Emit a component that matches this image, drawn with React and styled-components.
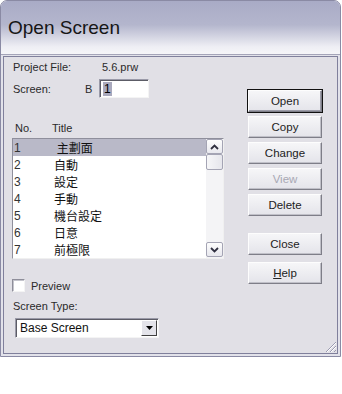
import React from 'react';
import styled, { createGlobalStyle } from 'styled-components';

const GlobalStyle = createGlobalStyle`
  body {
    margin: 0;
    background: #ffffff;
    font-family: "Liberation Sans", Arial, sans-serif;
  }
`;

const Window = styled.div`
  width: 341px;
  box-sizing: border-box;
  border: 1px solid #8a8aa4;
  border-radius: 7px 7px 0 0;
  background: #e2e2ea;
  overflow: hidden;
`;

const TitleBar = styled.div`
  height: 53px;
  padding-left: 7px;
  display: flex;
  align-items: center;
  font-size: 19px;
  color: #161616;
  background: linear-gradient(to bottom, #a9abc6 0%, #b4b6cd 45%, #eeeef4 86%, #f5f5f8 100%);
  border-bottom: 1px solid #a4a4b8;
`;

const Client = styled.div`
  position: relative;
  margin: 1px 2px 2px 2px;
  height: 296px;
  border: 1px solid #80809c;
  background: #e1e0e6;
  display: grid;
  grid-template-columns: 232px 1fr;
  font-size: 11px;
  color: #2a2a2a;
`;

const LeftCol = styled.div`
  display: flex;
  flex-direction: column;
  padding: 3px 0 0 8px;
`;

const FieldRow = styled.div`
  display: flex;
  align-items: center;
  height: ${p => p.h || 14}px;
  margin-top: ${p => p.mt || 0}px;
  padding-left: 1px;
`;

const Label = styled.span`
  width: ${p => p.w}px;
  flex: none;
`;

const TextBox = styled.div`
  width: 50px;
  height: 19px;
  box-sizing: border-box;
  background: #fff;
  border: 1px solid #9a9aa8;
  border-right-color: #f4f4f4;
  border-bottom-color: #f4f4f4;
  box-shadow: inset 1px 1px 0 #5c5c66;
  display: flex;
  align-items: center;
  padding-left: 3px;
  font-size: 12px;
`;

const Selected = styled.span`
  background: #a9a9bd;
  color: #000;
  line-height: 14px;
  padding: 0 1px;
`;

const ListHeader = styled.div`
  display: flex;
  height: 13px;
  margin-top: 23px;
  padding-left: 3px;
  align-items: center;
`;

const HeaderCell = styled.span`
  width: ${p => p.w}px;
`;

const ListBox = styled.div`
  margin-top: 4px;
  width: 212px;
  height: 121px;
  box-sizing: border-box;
  border: 1px solid #8f8f9c;
  border-right-color: #f0f0f0;
  border-bottom-color: #f0f0f0;
  background: #fff;
  display: flex;
`;

const Rows = styled.div`
  flex: 1;
`;

const Row = styled.div`
  display: flex;
  align-items: center;
  height: 17px;
  background: ${p => (p.active ? '#b9b9c8' : 'transparent')};
  color: #111;
`;

const Num = styled.span`
  width: 40px;
  padding-left: 1px;
  font-size: 12px;
  color: #333;
`;

const Title = styled.span`
  font-family: "Noto Sans CJK TC", "Noto Sans CJK SC", sans-serif;
  font-size: 12px;
  white-space: pre;
`;

const ScrollBar = styled.div`
  width: 17px;
  background: #f4f4f6;
  display: flex;
  flex-direction: column;
`;

const ScrollBtn = styled.div`
  height: 15px;
  box-sizing: border-box;
  border: 1px solid #a4a4b4;
  border-radius: 2px;
  background: linear-gradient(to bottom, #fdfdfd, #e8e8ee);
  display: flex;
  align-items: center;
  justify-content: center;
  margin-top: ${p => (p.bottom ? 'auto' : '0')};
  margin-bottom: ${p => (p.bottom ? '1px' : '0')};
`;

const Thumb = styled(ScrollBtn)`
  height: 16px;
  background: linear-gradient(to right, #f6f6f8, #e6e6ec);
`;

const CheckRow = styled.div`
  display: flex;
  align-items: center;
  margin-top: 20px;
  height: 13px;
`;

const CheckBox = styled.span`
  width: 13px;
  height: 13px;
  box-sizing: border-box;
  background: #fff;
  border: 1px solid #8e8e9a;
  border-right-color: #f4f4f4;
  border-bottom-color: #f4f4f4;
  box-shadow: inset 1px 1px 0 #c4c4cc;
  margin-right: 6px;
`;

const Combo = styled.div`
  margin: 6px 0 0 3px;
  width: 144px;
  height: 20px;
  box-sizing: border-box;
  background: #fff;
  border: 1px solid #9a9aa8;
  border-right-color: #f4f4f4;
  border-bottom-color: #f4f4f4;
  box-shadow: inset 1px 1px 0 #5c5c66;
  display: flex;
  align-items: center;
  padding-left: 4px;
  font-size: 12px;
  color: #111;
`;

const ComboText = styled.span`
  flex: 1;
`;

const DropBtn = styled.span`
  width: 16px;
  height: 16px;
  margin-right: 1px;
  box-sizing: border-box;
  border: 1px solid #fff;
  border-right-color: #404040;
  border-bottom-color: #404040;
  background: #e4e4ea;
  display: flex;
  align-items: center;
  justify-content: center;
`;

const RightCol = styled.div`
  display: flex;
  flex-direction: column;
  padding: 33px 0 0 12px;
`;

const Button = styled.div`
  width: 74px;
  height: 22px;
  box-sizing: border-box;
  margin-top: ${p => p.mt ?? 4}px;
  display: flex;
  align-items: center;
  justify-content: center;
  font-size: 11.5px;
  color: ${p => (p.disabled ? '#a8a8b4' : '#222')};
  background: linear-gradient(to bottom, #f6f6f8, #e4e4ea);
  border: 1px solid #fdfdfd;
  border-right-color: #7e7e88;
  border-bottom-color: #7e7e88;
  outline: ${p => (p.primary ? '1px solid #111' : 'none')};
  box-shadow: ${p => (p.primary ? 'inset -1px -1px 0 #9c9ca8' : 'inset -1px -1px 0 #c0c0c8')};
`;

const Grip = styled.svg`
  position: absolute;
  right: 0;
  bottom: 0;
`;

const rows = [
  ['1', ' 主劃面'],
  ['2', '自動'],
  ['3', '設定'],
  ['4', '手動'],
  ['5', '機台設定'],
  ['6', '日意'],
  ['7', '前極限'],
];

const Chevron = ({ down }) => (
  <svg width="9" height="6" viewBox="0 0 9 6">
    <polyline
      points={down ? '1,1 4.5,4.5 8,1' : '1,5 4.5,1.5 8,5'}
      fill="none"
      stroke="#303040"
      strokeWidth="1.8"
    />
  </svg>
);

export default function App() {
  return (
    <>
      <GlobalStyle />
      <Window>
        <TitleBar>Open Screen</TitleBar>
        <Client>
          <LeftCol>
            <FieldRow>
              <Label w={89}>Project File:</Label>
              <span>5.6.prw</span>
            </FieldRow>
            <FieldRow h={19} mt={5}>
              <Label w={72}>Screen:</Label>
              <Label w={14}>B</Label>
              <TextBox>
                <Selected>1</Selected>
              </TextBox>
            </FieldRow>
            <ListHeader>
              <HeaderCell w={37}>No.</HeaderCell>
              <HeaderCell>Title</HeaderCell>
            </ListHeader>
            <ListBox>
              <Rows>
                {rows.map(([n, t], i) => (
                  <Row key={n} active={i === 0}>
                    <Num>{n}</Num>
                    <Title>{t}</Title>
                  </Row>
                ))}
              </Rows>
              <ScrollBar>
                <ScrollBtn>
                  <Chevron />
                </ScrollBtn>
                <Thumb />
                <ScrollBtn bottom>
                  <Chevron down />
                </ScrollBtn>
              </ScrollBar>
            </ListBox>
            <CheckRow>
              <CheckBox />
              <span>Preview</span>
            </CheckRow>
            <FieldRow mt={7} h={13}>Screen Type:</FieldRow>
            <Combo>
              <ComboText>Base Screen</ComboText>
              <DropBtn>
                <svg width="7" height="4" viewBox="0 0 7 4">
                  <polygon points="0,0 7,0 3.5,4" fill="#000" />
                </svg>
              </DropBtn>
            </Combo>
          </LeftCol>
          <RightCol>
            <Button primary mt={0}>Open</Button>
            <Button>Copy</Button>
            <Button>Change</Button>
            <Button disabled>View</Button>
            <Button>Delete</Button>
            <Button mt={17}>Close</Button>
            <Button mt={7}>
              <span>
                <u>H</u>elp
              </span>
            </Button>
          </RightCol>
          <Grip width="13" height="13" viewBox="0 0 13 13">
            <g stroke="#9a9ab0" strokeWidth="1">
              <line x1="12" y1="2" x2="2" y2="12" />
              <line x1="12" y1="6" x2="6" y2="12" />
              <line x1="12" y1="10" x2="10" y2="12" />
            </g>
            <g stroke="#ffffff" strokeWidth="1">
              <line x1="12" y1="3" x2="3" y2="12" />
              <line x1="12" y1="7" x2="7" y2="12" />
            </g>
          </Grip>
        </Client>
      </Window>
    </>
  );
}
